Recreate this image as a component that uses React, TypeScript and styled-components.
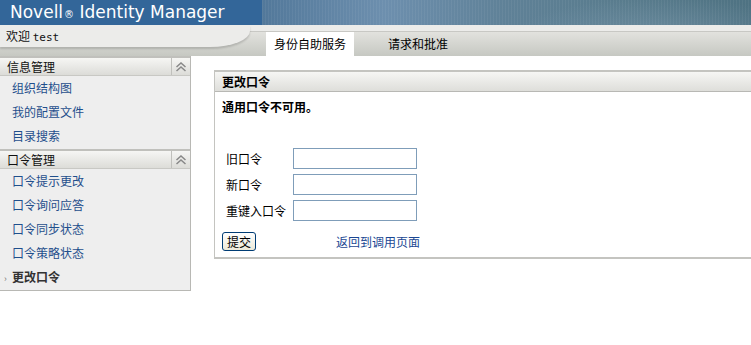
import styled, { createGlobalStyle } from 'styled-components'

const GlobalStyle = createGlobalStyle`
  html, body {
    margin: 0;
    padding: 0;
    background: #fff;
    overflow: hidden;
  }
  body {
    font-family: "Noto Sans CJK SC", "DejaVu Sans", sans-serif;
    font-size: 12px;
    color: #000;
  }
`

const infoLinks = ['组织结构图', '我的配置文件', '目录搜索']
const pwdLinks = ['口令提示更改', '口令询问应答', '口令同步状态', '口令策略状态']

function Collapse() {
  return (
    <CollapseBtn>
      <svg width='12' height='10' viewBox='0 0 12 10'>
        <path d='M1.5 5 L6 1 L10.5 5 M1.5 9 L6 5 L10.5 9' fill='none' stroke='#888' strokeWidth='1.5' />
      </svg>
    </CollapseBtn>
  )
}

export default function App() {
  return (
    <>
      <GlobalStyle />
      <Banner>
        <Brand>
          Novell<Reg>®</Reg> Identity Manager
        </Brand>
        <BannerArt />
      </Banner>
      <TopBar>
        <Welcome>
          欢迎 <User>test</User>
        </Welcome>
        <Tabs>
          <Tab active>身份自助服务</Tab>
          <Tab>请求和批准</Tab>
        </Tabs>
      </TopBar>
      <Body>
        <Sidebar>
          <SectionHead>
            <SectionTitle>信息管理</SectionTitle>
            <Collapse />
          </SectionHead>
          <LinkList>
            {infoLinks.map((l) => (
              <NavLink key={l}>{l}</NavLink>
            ))}
          </LinkList>
          <SectionHead>
            <SectionTitle>口令管理</SectionTitle>
            <Collapse />
          </SectionHead>
          <LinkList>
            {pwdLinks.map((l) => (
              <NavLink key={l}>{l}</NavLink>
            ))}
            <NavCurrent>
              <Bullet>›</Bullet>更改口令
            </NavCurrent>
          </LinkList>
        </Sidebar>
        <Main>
          <Panel>
            <PanelHead>更改口令</PanelHead>
            <PanelBody>
              <Notice>通用口令不可用。</Notice>
              <FormGrid>
                <Label>旧口令</Label>
                <Input type='password' />
                <Label>新口令</Label>
                <Input type='password' />
                <Label>重键入口令</Label>
                <Input type='password' />
              </FormGrid>
              <Actions>
                <Submit>提交</Submit>
                <BackLink>返回到调用页面</BackLink>
              </Actions>
            </PanelBody>
          </Panel>
        </Main>
      </Body>
    </>
  )
}

const Banner = styled.div`
  display: flex;
  height: 25px;
  background: #336699;
`

const Brand = styled.div`
  width: 262px;
  flex: none;
  padding-left: 10px;
  box-sizing: border-box;
  color: #fff;
  font-family: 'DejaVu Sans', sans-serif;
  font-size: 17px;
  line-height: 25px;
  white-space: nowrap;
`

const Reg = styled.span`
  font-size: 10px;
  margin-left: 1px;
`

const BannerArt = styled.div`
  flex: 1;
  background:
    radial-gradient(ellipse 220px 60px at 400px 40px, rgba(150, 175, 200, 0.35), transparent 70%),
    repeating-linear-gradient(90deg, rgba(255, 255, 255, 0.05) 0 1px, transparent 1px 3px),
    linear-gradient(90deg, #52789a 0%, #6d8fae 25%, #5f8197 50%, #587b8c 75%, #4e7282 100%);
`

const TopBar = styled.div`
  position: relative;
  height: 31px;
  display: flex;
  align-items: flex-end;
  background:
    linear-gradient(#ececea 0 6px, #c8c8c4 6px 7px, #e2e2de 7px, #c6c8c2 100%);
`

const Welcome = styled.div`
  position: absolute;
  left: 0;
  top: 0;
  width: 250px;
  height: 22px;
  padding: 2px 0 0 6px;
  box-sizing: border-box;
  background: #ececea;
  border-bottom-right-radius: 40px 16px;
  box-shadow: 0 2px 2px rgba(0, 0, 0, 0.15);
  font-size: 12px;
  color: #111;
`

const User = styled.span`
  font-family: 'DejaVu Sans Mono', monospace;
  font-size: 11px;
`

const Tabs = styled.div`
  display: flex;
  margin-left: 266px;
  height: 24px;
`

const Tab = styled.div<{ active?: boolean }>`
  padding: 0 ${({ active }) => (active ? '8px' : '0')};
  margin-right: ${({ active }) => (active ? '34px' : '0')};
  background: ${({ active }) => (active ? '#fff' : 'transparent')};
  line-height: 24px;
  font-size: 12px;
  color: #000;
`

const Body = styled.div`
  display: flex;
  align-items: flex-start;
`

const Sidebar = styled.div`
  width: 190px;
  flex: none;
  background: #eeeeee;
  border-right: 1px solid #b8b8b4;
  border-bottom: 1px solid #b8b8b4;
`

const SectionHead = styled.div`
  display: flex;
  height: 17px;
  border-top: 2px solid #c0c0bc;
  border-bottom: 1px solid #c8c8c4;
  background: linear-gradient(#f6f6f4, #dcdcd8);
`

const SectionTitle = styled.div`
  flex: 1;
  padding-left: 7px;
  line-height: 17px;
  font-size: 12px;
  color: #111;
`

const CollapseBtn = styled.div`
  width: 18px;
  display: flex;
  align-items: center;
  justify-content: center;
  border-left: 1px solid #c0c0bc;
`

const LinkList = styled.div`
  display: flex;
  flex-direction: column;
  padding: 0 0 1px;
`

const NavLink = styled.div`
  height: 24px;
  line-height: 24px;
  padding-left: 12px;
  color: #1f4f8c;
  font-size: 12px;
`

const NavCurrent = styled.div`
  height: 24px;
  line-height: 24px;
  padding-left: 4px;
  color: #333;
  font-weight: bold;
  font-size: 12px;
`

const Bullet = styled.span`
  display: inline-block;
  width: 8px;
  font-size: 9px;
  color: #777;
  font-weight: normal;
`

const Main = styled.div`
  flex: 1;
  padding: 14px 0 0 23px;
`

const Panel = styled.div`
  border: 2px solid #c4c4c0;
  border-width: 2px 0 2px 1px;
`

const PanelHead = styled.div`
  height: 19px;
  line-height: 19px;
  padding-left: 7px;
  font-weight: bold;
  font-size: 12px;
  background: linear-gradient(#f6f6f4, #dededa);
  border-bottom: 1px solid #b8b8b4;
`

const PanelBody = styled.div`
  padding: 7px 0 6px 7px;
`

const Notice = styled.div`
  font-weight: bold;
  font-size: 12px;
  line-height: 16px;
  margin-bottom: 33px;
`

const FormGrid = styled.div`
  display: grid;
  grid-template-columns: 67px 124px;
  row-gap: 5px;
  align-items: center;
  padding-left: 4px;
`

const Label = styled.div`
  font-size: 12px;
`

const Input = styled.input`
  width: 124px;
  height: 21px;
  box-sizing: border-box;
  border: 1px solid #7f9db9;
  margin: 0;
  padding: 0;
  background: #fff;
`

const Actions = styled.div`
  display: flex;
  align-items: center;
  margin-top: 11px;
`

const Submit = styled.button`
  width: 34px;
  height: 19px;
  padding: 0;
  border: 1px solid #003c74;
  border-radius: 3px;
  background: linear-gradient(#ffffff, #ece9d8);
  font-family: inherit;
  font-size: 12px;
  line-height: 16px;
  color: #000;
`

const BackLink = styled.div`
  margin-left: 80px;
  color: #1a4793;
  font-size: 12px;
`
